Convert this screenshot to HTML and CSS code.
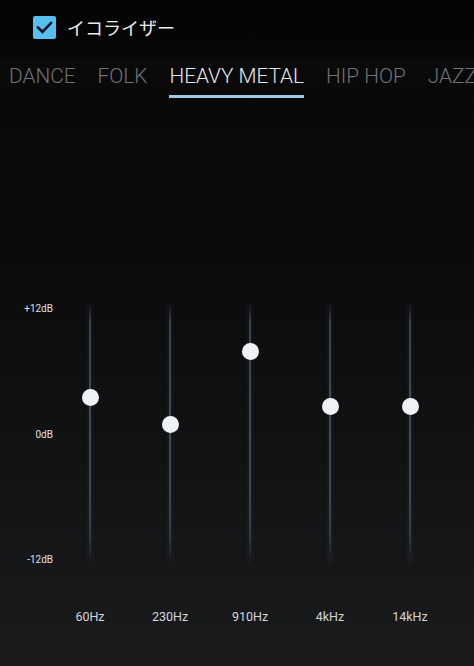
FILE: index.html
```html
<!DOCTYPE html>
<html lang="ja">
<head>
<meta charset="utf-8">
<link rel="stylesheet" href="styles.css">
</head>
<body>
<div class="screen">
  <header class="header">
    <span class="checkbox">
      <svg width="23" height="23" viewBox="0 0 23 23"><path d="M5 11.5 L9.5 16 L18 7" fill="none" stroke="#0c1722" stroke-width="2.6" stroke-linecap="square"/></svg>
    </span>
    <span class="title">イコライザー</span>
  </header>
  <nav class="tabs">
    <span class="tab">DANCE</span>
    <span class="tab">FOLK</span>
    <span class="tab active">HEAVY METAL</span>
    <span class="tab">HIP HOP</span>
    <span class="tab">JAZZ</span>
  </nav>
  <section class="eq">
    <div class="scale">
      <span>+12dB</span>
      <span>0dB</span>
      <span>-12dB</span>
    </div>
    <div class="band"><div class="track"><span class="knob" style="top:86px"></span></div></div>
    <div class="band"><div class="track"><span class="knob" style="top:113px"></span></div></div>
    <div class="band"><div class="track"><span class="knob" style="top:40px"></span></div></div>
    <div class="band"><div class="track"><span class="knob" style="top:95px"></span></div></div>
    <div class="band"><div class="track"><span class="knob" style="top:95px"></span></div></div>
    <div class="spacer"></div>
    <div class="freq">60Hz</div>
    <div class="freq">230Hz</div>
    <div class="freq">910Hz</div>
    <div class="freq">4kHz</div>
    <div class="freq">14kHz</div>
  </section>
</div>
</body>
</html>
```
FILE: styles.css
```css
html, body {
  margin: 0;
  padding: 0;
}
body {
  width: 474px;
  height: 666px;
  overflow: hidden;
  font-family: Roboto, "Noto Sans CJK JP", sans-serif;
  background: #070707;
}
.screen {
  height: 666px;
  background: linear-gradient(to bottom, #040404 0px, #060606 55px, #0a0a0a 60px, #090909 103px, #0b0b0c 250px, #111213 450px, #1a1b1d 666px);
}
.header {
  height: 54px;
  display: flex;
  align-items: center;
  padding-left: 33px;
  box-sizing: border-box;
}
.checkbox {
  width: 23px;
  height: 23px;
  background: #57bef0;
  border-radius: 2px;
  display: block;
}
.checkbox svg {
  display: block;
}
.title {
  margin-left: 11px;
  font-family: "Noto Sans CJK JP", sans-serif;
  font-size: 18px;
  color: #ececec;
  line-height: 24px;
}
.tabs {
  height: 49px;
  display: flex;
  align-items: flex-start;
  gap: 22px;
  padding-left: 9px;
  white-space: nowrap;
  overflow: hidden;
}
.tab {
  font-size: 20.8px;
  font-weight: 300;
  line-height: 24px;
  padding-top: 10px;
  padding-bottom: 7px;
  color: #6f7277;
  border-bottom: 3px solid transparent;
}
.tab.active {
  color: #e6e7e9;
  border-bottom-color: #9fc5e7;
}
.eq {
  display: grid;
  grid-template-columns: 50px repeat(5, 80px);
  padding-top: 200px;
}
.scale {
  height: 263px;
  display: flex;
  flex-direction: column;
  justify-content: space-between;
  align-items: flex-end;
  margin-right: -3px;
  font-size: 10px;
  line-height: 12px;
  color: #e0e1e3;
}
.band {
  display: flex;
  justify-content: center;
}
.track {
  position: relative;
  width: 2px;
  height: 260px;
  background: linear-gradient(to bottom, rgba(60,66,82,0) 0%, #394050 7%, #424a5a 40%, #414858 70%, #353b49 90%, rgba(54,60,74,0) 100%);
  box-shadow: 0 0 4px rgba(70,80,100,0.35);
}
.knob {
  position: absolute;
  left: -7.5px;
  width: 17px;
  height: 17px;
  border-radius: 50%;
  background: #eef2f7;
}
.spacer {
  height: 1px;
}
.freq {
  margin-top: 43px;
  text-align: center;
  font-size: 12.5px;
  line-height: 16px;
  color: #d3d5d8;
}
```
